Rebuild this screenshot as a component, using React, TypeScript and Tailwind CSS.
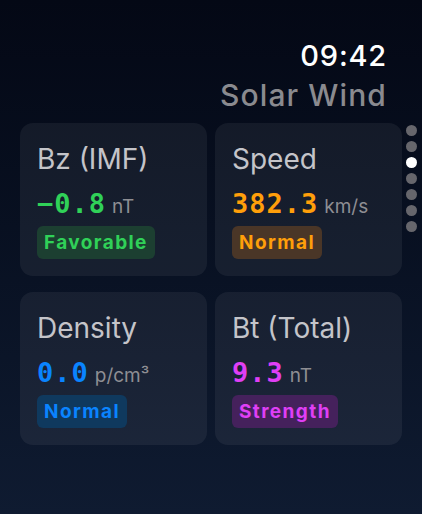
import React from 'react';

type Metric = {
  title: string;
  value: string;
  unit: string;
  status: string;
  color: string;
  badge: string;
};

const metrics: Metric[] = [
  { title: 'Bz (IMF)', value: '−0.8', unit: 'nT', status: 'Favorable', color: 'text-[#30d158]', badge: 'bg-[#1c3f31]' },
  { title: 'Speed', value: '382.3', unit: 'km/s', status: 'Normal', color: 'text-[#ff9f0a]', badge: 'bg-[#4a3627]' },
  { title: 'Density', value: '0.0', unit: 'p/cm³', status: 'Normal', color: 'text-[#0a84ff]', badge: 'bg-[#0f395e]' },
  { title: 'Bt (Total)', value: '9.3', unit: 'nT', status: 'Strength', color: 'text-[#df3ff5]', badge: 'bg-[#45215c]' },
];

const MetricCard: React.FC<{ m: Metric }> = ({ m }) => (
  <div className="rounded-[13px] bg-white/[0.06] pl-[17px] pr-3 pt-[19px] pb-[17px]">
    <div className="h-[34px] text-[28px] leading-[34px] text-[#c4c4c9] whitespace-nowrap">{m.title}</div>
    <div className="mt-[12px] flex items-baseline h-[32px]">
      <span
        className={`text-[27px] leading-[32px] font-bold tracking-[1px] ${m.color}`}
        style={{ fontFamily: '"DejaVu Sans Mono", monospace' }}
      >
        {m.value}
      </span>
      <span className="ml-[6px] text-[19px] text-[#8e8e93]">{m.unit}</span>
    </div>
    <div className="mt-[6px] flex">
      <span className={`rounded-[6px] px-[7px] h-[33px] leading-[33px] text-[19px] font-bold tracking-[1.4px] ${m.badge} ${m.color}`}>
        {m.status}
      </span>
    </div>
  </div>
);

export default function App() {
  return (
    <div
      className="min-h-screen w-full bg-linear-to-b from-[#040815] to-[#0f1b31] overflow-hidden"
      style={{ fontFamily: 'Inter, "Noto Sans", sans-serif' }}
    >
      <div className="flex flex-col items-end pr-[35px] pt-[39px]">
        <div className="h-[34px] text-[29px] leading-[34px] font-medium text-white tracking-[0.8px]">09:42</div>
        <div className="mt-[5px] h-[34px] text-[30px] leading-[34px] font-medium text-[#8a8a8f] tracking-[1.1px]">Solar Wind</div>
      </div>
      <div className="mt-[11px] flex pl-[20px]">
        <div className="grid w-[382px] grid-cols-2 gap-x-2 gap-y-4">
          {metrics.map((m) => (
            <MetricCard key={m.title} m={m} />
          ))}
        </div>
        <div className="ml-[4px] mt-[2px] flex flex-col gap-[5px]">
          {[0, 1, 2, 3, 4, 5, 6].map((i) => (
            <span
              key={i}
              className={`block h-[11px] w-[11px] rounded-full ${i === 2 ? 'bg-white' : 'bg-[#66666c]'}`}
            />
          ))}
        </div>
      </div>
    </div>
  );
}
